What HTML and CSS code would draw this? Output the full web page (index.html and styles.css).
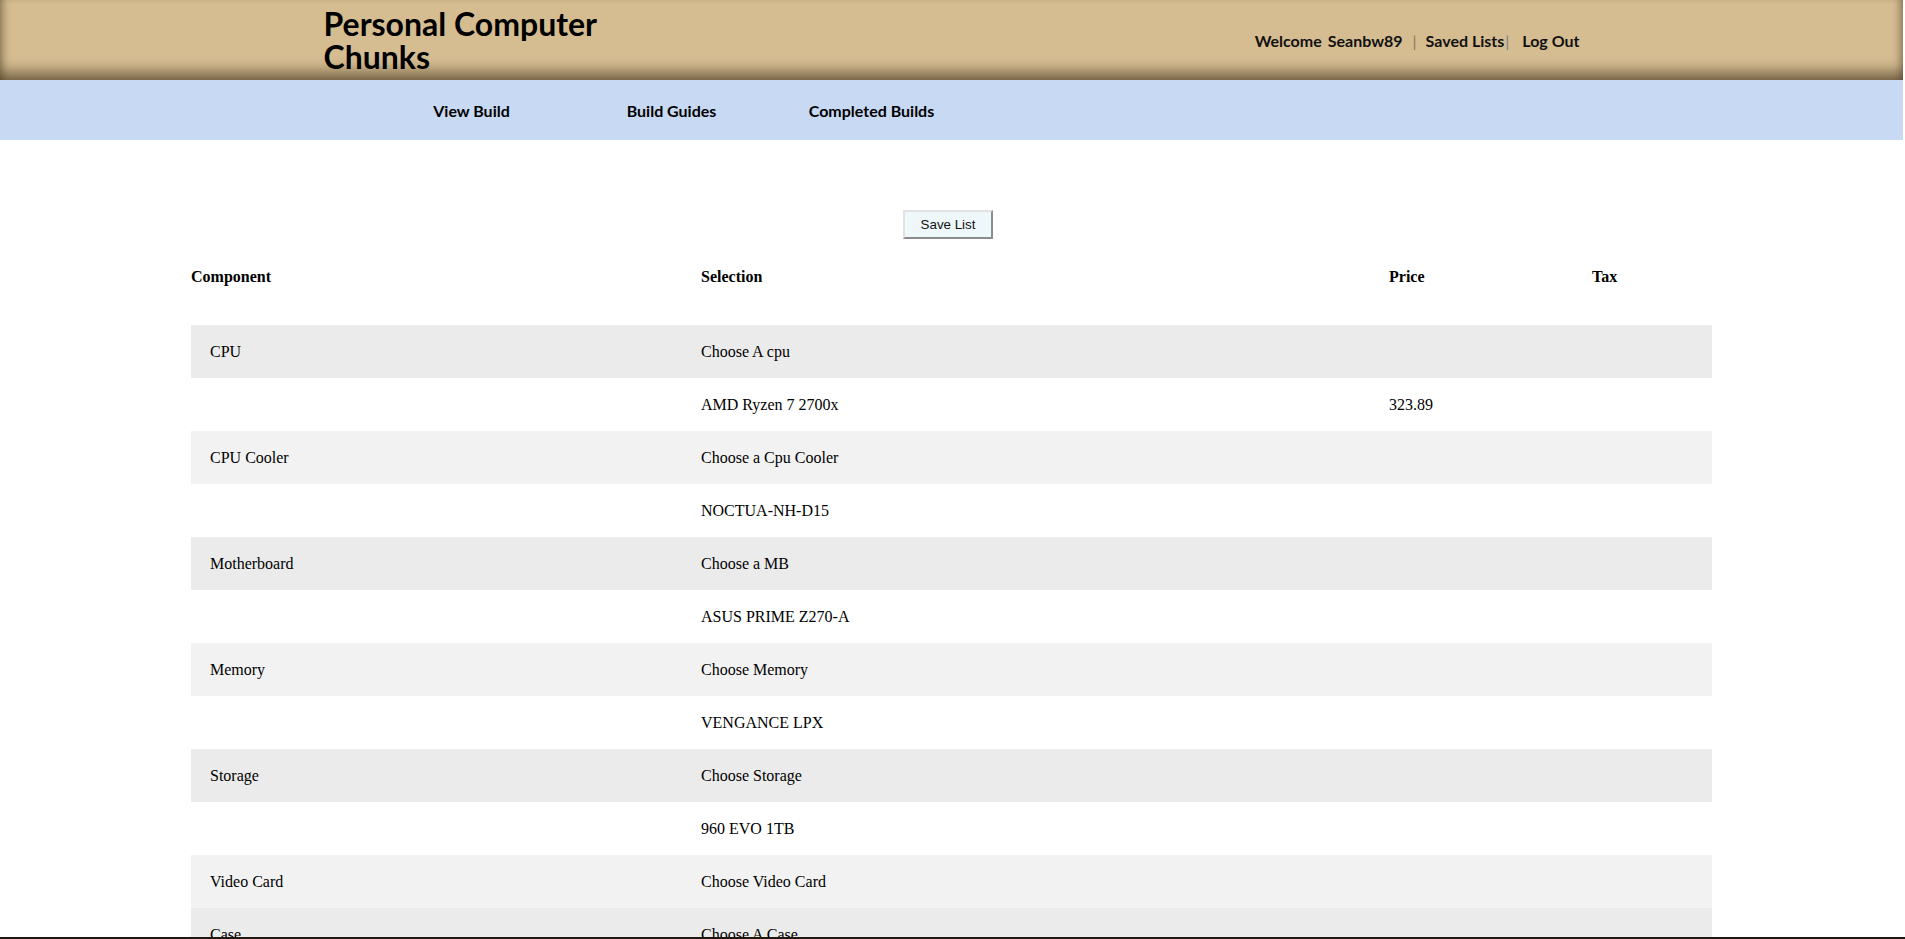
FILE: index.html
```html
<!DOCTYPE html>
<html lang="en">
<head>
<meta charset="utf-8">
<title>Personal Computer Chunks</title>
<link rel="stylesheet" href="styles.css">
</head>
<body>
<header class="site-header">
  <div class="header-inner">
    <h1 class="site-title">Personal Computer<br>Chunks</h1>
    <div class="user-nav">
      <span class="welcome">Welcome</span><span class="username">Seanbw89</span><span class="sep">|</span><a class="user-link saved" href="#">Saved Lists</a><span class="sep tight">|</span><a class="user-link" href="#">Log Out</a>
    </div>
  </div>
</header>
<nav class="main-nav">
  <ul class="nav-list">
    <li class="nav-item"><a href="#">View Build</a></li>
    <li class="nav-item"><a href="#">Build Guides</a></li>
    <li class="nav-item"><a href="#">Completed Builds</a></li>
  </ul>
</nav>
<main class="content">
  <div class="actions">
    <button class="save-btn" type="button">Save List</button>
  </div>
  <table class="build-table">
    <colgroup>
      <col class="col-component">
      <col class="col-selection">
      <col class="col-price">
      <col class="col-tax">
    </colgroup>
    <thead>
      <tr>
        <th>Component</th>
        <th>Selection</th>
        <th>Price</th>
        <th>Tax</th>
      </tr>
    </thead>
    <tbody>
      <tr class="row-a"><td class="comp">CPU</td><td>Choose A cpu</td><td></td><td></td></tr>
      <tr class="row-w"><td class="comp"></td><td>AMD Ryzen 7 2700x</td><td>323.89</td><td></td></tr>
      <tr class="row-b"><td class="comp">CPU Cooler</td><td>Choose a Cpu Cooler</td><td></td><td></td></tr>
      <tr class="row-w"><td class="comp"></td><td>NOCTUA-NH-D15</td><td></td><td></td></tr>
      <tr class="row-a"><td class="comp">Motherboard</td><td>Choose a MB</td><td></td><td></td></tr>
      <tr class="row-w"><td class="comp"></td><td>ASUS PRIME Z270-A</td><td></td><td></td></tr>
      <tr class="row-b"><td class="comp">Memory</td><td>Choose Memory</td><td></td><td></td></tr>
      <tr class="row-w"><td class="comp"></td><td>VENGANCE LPX</td><td></td><td></td></tr>
      <tr class="row-a"><td class="comp">Storage</td><td>Choose Storage</td><td></td><td></td></tr>
      <tr class="row-w"><td class="comp"></td><td>960 EVO 1TB</td><td></td><td></td></tr>
      <tr class="row-b"><td class="comp">Video Card</td><td>Choose Video Card</td><td></td><td></td></tr>
      <tr class="row-a"><td class="comp">Case</td><td>Choose A Case</td><td></td><td></td></tr>
      <tr class="row-b"><td class="comp">Power Supply</td><td>Choose A Power Supply</td><td></td><td></td></tr>
    </tbody>
  </table>
</main>
<footer class="site-footer"></footer>
</body>
</html>
```
FILE: styles.css
```css
html {
  overflow: hidden;
}
body {
  margin: 0;
  font-family: "Liberation Serif", "Times New Roman", serif;
  color: #000;
  background: #fff;
}
a {
  color: inherit;
  text-decoration: none;
}

/* Header */
.site-header {
  height: 80px;
  background: #d5bc91;
  margin-right: 2px;
  box-shadow:
    inset 0 -14px 14px -6px rgba(40, 30, 10, 0.55),
    inset 8px 0 8px -6px rgba(60, 45, 20, 0.45),
    inset -8px 0 8px -6px rgba(60, 45, 20, 0.45);
}
.header-inner {
  width: 1256px;
  margin: 0 auto;
  height: 100%;
  display: flex;
  justify-content: space-between;
  align-items: flex-start;
  font-family: Lato, "Liberation Sans", sans-serif;
}
.site-title {
  margin: 0;
  padding-top: 7px;
  font-size: 32px;
  line-height: 33px;
  font-weight: 700;
  color: #000;
}
.user-nav {
  align-self: center;
  font-size: 16px;
  font-weight: 700;
  color: #111;
  display: flex;
  align-items: center;
  white-space: pre;
}
.welcome {
  margin-right: 6px;
}
.sep {
  font-weight: 400;
  color: #8a7650;
  margin: 0 9px 0 10px;
}
.sep.tight {
  color: #6f8792;
  margin: 0 13px 0 1px;
}

/* Main nav */
.main-nav {
  height: 60px;
  background: #c8d9f3;
  margin-right: 2px;
}
.nav-list {
  list-style: none;
  margin: 0 auto;
  padding: 0 0 0 48px;
  width: 1256px;
  box-sizing: border-box;
  display: flex;
  height: 100%;
  align-items: center;
  font-family: Lato, "Liberation Sans", sans-serif;
  font-size: 16px;
  font-weight: 700;
}
.nav-item {
  width: 200px;
  text-align: center;
}

/* Content */
.content {
  padding-top: 70px;
}
.actions {
  text-align: center;
}
.save-btn {
  font-family: Arial, "Liberation Sans", sans-serif;
  font-size: 13.33px;
  line-height: 15px;
  color: #111;
  background: #eef8fa;
  padding: 5px 16px 5px 16px;
  margin-right: 9px;
  border-top: 2px solid #e2e2e2;
  border-left: 2px solid #e2e2e2;
  border-right: 2px solid #8c8c8c;
  border-bottom: 2px solid #8c8c8c;
  border-radius: 0;
}
.build-table {
  width: 1521px;
  margin: 29px 0 0 191px;
  border-collapse: collapse;
  table-layout: fixed;
  font-size: 16px;
}
.col-component { width: 510px; }
.col-selection { width: 688px; }
.col-price { width: 203px; }
.col-tax { width: 120px; }

.build-table th {
  text-align: left;
  font-weight: 700;
  padding: 0 0 39px 0;
  line-height: 18px;
  vertical-align: top;
}
.build-table td {
  height: 53px;
  padding: 0;
  line-height: 18px;
  vertical-align: middle;
}
.build-table td.comp {
  padding-left: 19px;
}
.row-a { background: #ebebeb; }
.row-b { background: #f2f2f2; }
.row-w { background: #fff; }

.site-footer {
  position: fixed;
  left: 0;
  right: 0;
  bottom: 0;
  height: 2px;
  background: #23160e;
}
```
